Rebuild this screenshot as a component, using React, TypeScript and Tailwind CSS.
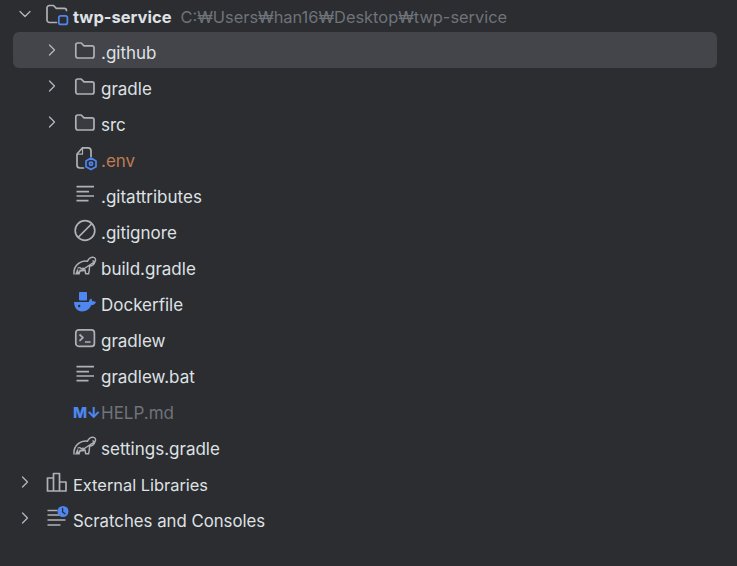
import type { ReactNode } from 'react';
import { ChevronDown, ChevronRight } from 'lucide-react';

const STROKE = '#aeb1b7';
const BLUE = '#4f86f0';

function Svg({ children }: { children: ReactNode }) {
  return (
    <svg className="overflow-visible" width="22" height="22" viewBox="0 0 22 22" fill="none" stroke={STROKE} strokeWidth="1.7" strokeLinejoin="round" strokeLinecap="round">
      {children}
    </svg>
  );
}

function FolderIcon() {
  return (
    <Svg>
      <path d="M2.8 6a2 2 0 0 1 2-2h3.4l2.8 2.8h8a2 2 0 0 1 2 2v8.2a2 2 0 0 1-2 2H4.8a2 2 0 0 1-2-2z" fill="#393b40" />
    </Svg>
  );
}

function ModuleIcon() {
  return (
    <Svg>
      <path d="M1 17V5a2.5 2.5 0 0 1 2.5-2.5h4l2.8 2.8h8a2.2 2.2 0 0 1 2.2 2.2M10.5 19.5h-7A2.5 2.5 0 0 1 1 17" />
      <rect x="12.8" y="12.8" width="8.6" height="8.6" rx="2" stroke={BLUE} />
    </Svg>
  );
}

function EnvIcon() {
  return (
    <Svg>
      <path d="M10.5 21H7a3 3 0 0 1-3-3V7l5.5-6.2H15a3 3 0 0 1 3 3V9.5" />
      <path d="M4.5 7.2h5V1.5" strokeWidth="1.2" />
      <path d="M18 11l5 2.9v5.8L18 22.6l-5-2.9v-5.8z" stroke={BLUE} />
      <circle cx="18" cy="16.8" r="1.6" stroke={BLUE} />
    </Svg>
  );
}

function LinesIcon() {
  return (
    <Svg>
      <path d="M3.5 3.7h17.5M3.5 8.7h12.5M3.5 13h17.5M3.5 17.6h12" strokeLinecap="butt" />
    </Svg>
  );
}

function IgnoreIcon() {
  return (
    <Svg>
      <circle cx="12" cy="11.5" r="9.8" />
      <path d="M5.5 18L18.5 5" />
    </Svg>
  );
}

function GradleIcon() {
  return (
    <Svg>
      <path
        d="M1 19c-.4-4 1.2-8 4.6-10.6C8.4 6.2 11.6 5.6 14.5 6.2 15.5 3.8 18 1.8 20.6 2.4c1.6.4 2.4 2 1.8 3.4-.6 1.1-2 1-2.4 0M22 6.5c-.8 3-3 4.6-5.4 4.6-.1 2.6-.4 5.2-1 7.6h-3l-.5-3.6c-1.6.7-3.3.7-5 .2l-1 3.4H4l.7-3.8L3 19z"
        strokeWidth="1.45"
      />
      <path d="M5 13c1.4-.8 2.6-.2 3.4.8 1-.8 2-.8 3 .2" strokeWidth="1.2" />
    </Svg>
  );
}

function DockerIcon() {
  return (
    <svg className="overflow-visible" width="22" height="22" viewBox="0 0 22 22" fill={BLUE}>
      <rect x="6" y="1" width="8" height="8.5" rx="0.8" />
      <path d="M1 11h14.8c.3-1.8 1.2-2.8 2.4-3.4.7.9 1.1 1.8 1.1 2.9 1-.3 2.3-.3 3.7.4-1 2.2-2.6 3.1-4.6 3.2C16.6 18.4 13.2 20.5 9 20.5 4.2 20.5 1.4 17 1 11z" />
      <circle cx="6.2" cy="15" r="1.2" fill="#2b2d30" />
    </svg>
  );
}

function TerminalIcon() {
  return (
    <Svg>
      <rect x="2.8" y="2.8" width="18.6" height="16.6" rx="3" fill="#393b40" />
      <path d="M6.5 7.5l3.5 3.2-3.5 3.2M12 15h5.5" strokeLinecap="butt" />
    </Svg>
  );
}

function MarkdownIcon() {
  return <span className="w-[24px] translate-y-[2px] text-[15px] leading-none font-extrabold tracking-[-0.5px] whitespace-nowrap text-[#4f86f0]">M↓</span>;
}

function LibrariesIcon() {
  return (
    <Svg>
      <path d="M1.5 7h6v13h-6zM7.5 2.5h6V20h-6zM13.5 11h6.5v9h-6.5z" />
    </Svg>
  );
}

function ScratchesIcon() {
  return (
    <Svg>
      <path d="M1.5 3.5h10M1.5 8h14M1.5 13h18M1.5 18h13" strokeLinecap="butt" />
      <circle cx="17" cy="4.5" r="5.5" fill={BLUE} stroke="none" />
      <path d="M16.6 1.5v3.4l2.4 1.8" stroke="#2b2d30" strokeWidth="1.3" />
    </Svg>
  );
}

type Item = {
  name: string;
  icon: ReactNode;
  expandable?: boolean;
  color?: string;
  selected?: boolean;
};

const children: Item[] = [
  { name: '.github', icon: <FolderIcon />, expandable: true, selected: true },
  { name: 'gradle', icon: <FolderIcon />, expandable: true },
  { name: 'src', icon: <FolderIcon />, expandable: true },
  { name: '.env', icon: <EnvIcon />, color: 'text-[#c07c52]' },
  { name: '.gitattributes', icon: <LinesIcon /> },
  { name: '.gitignore', icon: <IgnoreIcon /> },
  { name: 'build.gradle', icon: <GradleIcon /> },
  { name: 'Dockerfile', icon: <DockerIcon /> },
  { name: 'gradlew', icon: <TerminalIcon /> },
  { name: 'gradlew.bat', icon: <LinesIcon /> },
  { name: 'HELP.md', icon: <MarkdownIcon />, color: 'text-[#6f737a]' },
  { name: 'settings.gradle', icon: <GradleIcon /> },
];

function ChildRow({ item }: { item: Item }) {
  return (
    <div className={`flex h-9 items-center rounded-md pl-[29px] ${item.selected ? 'bg-[#43454a]' : ''}`}>
      <div className="flex w-5 justify-center text-[#b4b8bf]">
        {item.expandable && <ChevronRight size={20} strokeWidth={1.5} />}
      </div>
      <div className="ml-[11px] flex w-[22px] items-center">{item.icon}</div>
      <span className={`ml-[6px] translate-y-[3px] ${item.color ?? ''}`}>{item.name}</span>
    </div>
  );
}

function RootRow({ icon, name, nameClass }: { icon: ReactNode; name: string; nameClass: string }) {
  return (
    <div className="flex h-9 items-center pl-[2px]">
      <div className="flex w-5 justify-center text-[#b4b8bf]">
        <ChevronRight size={20} strokeWidth={1.5} />
      </div>
      <div className="ml-[11px] flex w-[22px] items-center">{icon}</div>
      <span className={`ml-[5px] translate-y-[3px] ${nameClass}`}>{name}</span>
    </div>
  );
}

export default function App() {
  return (
    <div className="h-[566px] w-[737px] overflow-hidden bg-[#2b2d30] pr-5 pl-[13px] text-[17px] leading-6 text-[#dfe1e5] [font-family:Inter,sans-serif]">
      <div className="-mt-1">
        <div className="flex h-9 items-center pl-[2px]">
          <div className="flex w-5 justify-center text-[#b4b8bf]">
            <ChevronDown size={20} strokeWidth={1.5} />
          </div>
          <div className="ml-[11px] flex w-[22px] items-center">
            <ModuleIcon />
          </div>
          <span className="ml-[5px] translate-y-[3px] text-[16.5px] font-bold">twp-service</span>
          <span className="ml-[9px] translate-y-[3px] text-[16.4px] text-[#6f737a]">C:₩Users₩han16₩Desktop₩twp-service</span>
        </div>
        {children.map((item) => (
          <ChildRow key={item.name} item={item} />
        ))}
        <RootRow icon={<LibrariesIcon />} name="External Libraries" nameClass="text-[16.4px]" />
        <RootRow icon={<ScratchesIcon />} name="Scratches and Consoles" nameClass="text-[16.75px]" />
      </div>
    </div>
  );
}
